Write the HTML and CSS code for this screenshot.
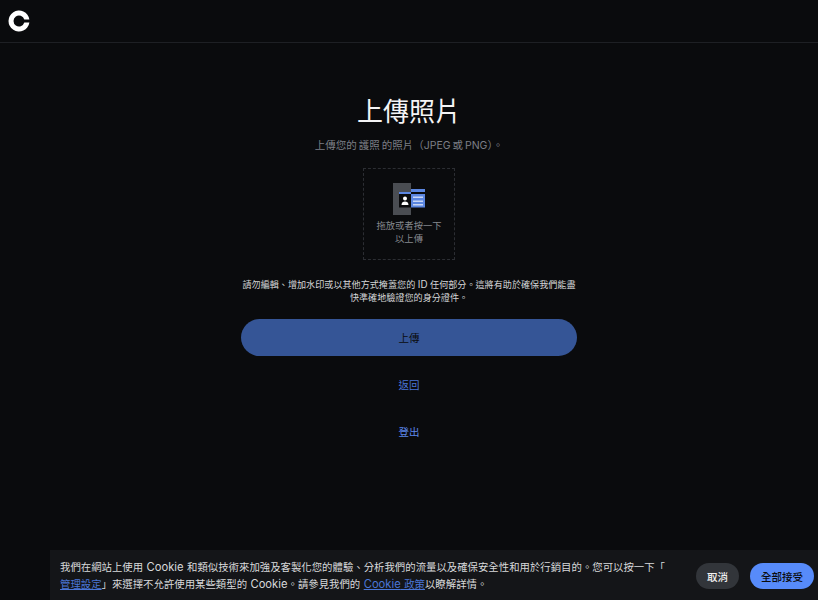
FILE: index.html
```
<!DOCTYPE html>
<html lang="zh-Hant">
<head>
<meta charset="utf-8">
<title>上傳照片</title>
<link rel="stylesheet" href="styles.css">
</head>
<body>
<header class="topbar">
  <svg class="logo" width="22" height="22" viewBox="0 0 22 22"><path fill="#fff" d="M21.400 9.500A10.500 10.500 0 1 0 21.400 12.500L16.300 12.500A5.500 5.500 0 1 1 16.300 9.500Z"/></svg>
</header>
<main class="content">
  <h1 class="title">上傳照片</h1>
  <p class="subtitle">上傳您的 護照 的照片（JPEG 或 PNG）。</p>
  <div class="dropzone">
    <svg class="id-icon" width="32" height="32" viewBox="0 0 32 32">
      <rect x="0" y="0" width="18" height="32" fill="#4a4d52"/>
      <rect x="6" y="9" width="12" height="2" fill="#5b86e0"/>
      <rect x="18" y="6" width="14" height="3" fill="#5b86e0"/>
      <rect x="18" y="9" width="14" height="2" fill="#0a0b0d"/>
      <rect x="6" y="11" width="12" height="13.500" fill="#0a0b0d"/>
      <circle cx="12" cy="15.500" r="2" fill="#fff"/>
      <path d="M8.500 22c0-2.500 1.500-3.500 3.500-3.500s3.500 1 3.500 3.500z" fill="#fff"/>
      <rect x="18" y="11" width="14" height="13.500" fill="#5b86e0"/>
      <rect x="20" y="13.500" width="10" height="1.500" fill="#c8d6f5"/>
      <rect x="20" y="17.500" width="10" height="1.500" fill="#c8d6f5"/>
      <rect x="20" y="21" width="10" height="1.500" fill="#c8d6f5"/>
    </svg>
    <div class="drop-text">拖放或者按一下<br>以上傳</div>
  </div>
  <p class="notice">請勿編輯、增加水印或以其他方式掩蓋您的 <span class="latin">ID</span> 任何部分。這將有助於確保我們能盡<br>快準確地驗證您的身分證件。</p>
  <button class="upload-btn" type="button">上傳</button>
  <a class="link link-back" href="#">返回</a>
  <a class="link link-out" href="#">登出</a>
</main>
<aside class="cookie">
  <p class="cookie-text">我們在網站上使用 <span class="latin">Cookie</span> 和類似技術來加強及客製化您的體驗、分析我們的流量以及確保安全性和用於行銷目的。您可以按一下「<br><a href="#">管理設定</a>」來選擇不允許使用某些類型的 <span class="latin">Cookie</span>。請參見我們的 <a href="#"><span class="latin">Cookie</span> 政策</a>以瞭解詳情。</p>
  <button class="cookie-btn cancel" type="button">取消</button>
  <button class="cookie-btn accept" type="button">全部接受</button>
</aside>
</body>
</html>
```
FILE: styles.css
```
* { box-sizing: border-box; }
html, body { margin: 0; height: 100%; }
body {
  position: relative;
  width: 818px;
  height: 600px;
  overflow: hidden;
  background: #0a0b0d;
  color: #fff;
  font-family: Inter, "Liberation Sans", "Noto Sans CJK TC", sans-serif;
}
.latin { font-size: 1.08em; }
.topbar {
  height: 43px;
  border-bottom: 1px solid #1e2024;
  padding: 10px 0 0 8px;
}
.logo { display: block; }
.content {
  width: 336px;
  margin: 0 auto;
  display: flex;
  flex-direction: column;
  align-items: center;
  padding-top: 51px;
}
.title {
  margin: 0;
  font-size: 26px;
  line-height: 36px;
  font-weight: 400;
  color: #f4f4f5;
}
.subtitle {
  margin: 8px 0 0;
  font-size: 10.500px;
  line-height: 16px;
  word-spacing: -1px;
  color: #7c7f86;
  white-space: nowrap;
}
.dropzone {
  margin-top: 14px;
  width: 92px;
  height: 92px;
  border: 1px dashed #2c2e33;
  display: flex;
  flex-direction: column;
  align-items: center;
  padding-top: 14px;
}
.drop-text {
  margin-top: 4px;
  font-size: 9.300px;
  line-height: 13px;
  text-align: center;
  color: #85888e;
  white-space: nowrap;
}
.notice {
  margin: 18px 0 0;
  width: 336px;
  font-size: 9.100px;
  line-height: 13px;
  text-align: center;
  color: #d5d6d8;
  white-space: nowrap;
}
.upload-btn {
  margin-top: 15px;
  width: 336px;
  height: 37px;
  border: 0;
  border-radius: 19px;
  background: #355596;
  color: #0a0b0d;
  font: inherit;
  font-size: 10.500px;
}
.link {
  font-size: 10.500px;
  line-height: 16px;
  color: #4a76d6;
  text-decoration: none;
}
.link-back { margin-top: 22px; }
.link-out { margin-top: 31px; color: #5b86e8; }
.cookie {
  position: absolute;
  left: 50px;
  right: 0;
  bottom: 0;
  height: 50px;
  background: #141518;
  display: flex;
  align-items: center;
  padding: 2px 4px 0 10px;
}
.cookie-text {
  margin: 0;
  width: 624px;
  flex: none;
  font-size: 10.400px;
  line-height: 16px;
  word-spacing: 0.500px;
  color: #d8d9db;
  white-space: nowrap;
}
.cookie-text a { color: #4a76d6; }
.cookie-btn {
  height: 26px;
  border: 0;
  border-radius: 13px;
  font: inherit;
  font-size: 10.500px;
  font-weight: 500;
  padding: 0;
}
.cancel { margin-left: 12px; width: 43px; background: #32353a; color: #f0f0f0; }
.accept { margin-left: 11px; width: 64px; background: #578bfa; color: #0a0b0d; }
```
